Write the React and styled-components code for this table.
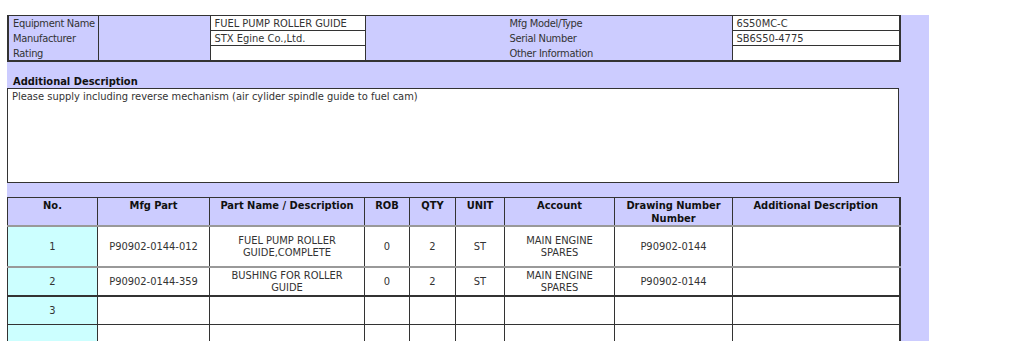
import React from 'react'
import styled, { createGlobalStyle } from 'styled-components'

const GlobalStyle = createGlobalStyle`
  body {
    margin: 0;
    background: #fff;
    font-family: "DejaVu Sans Condensed", "DejaVu Sans", Verdana, sans-serif;
    font-size: 11px;
    color: #333;
  }
`

const Panel = styled.div`
  width: 892px;
  margin: 15px 0 0 7px;
  padding-right: 30px;
  background: #ccccff;
`

const InfoTable = styled.table`
  width: 892px;
  border-collapse: collapse;
  table-layout: fixed;
  border: 2px solid #333;
  border-top-width: 1px;
`

const InfoCell = styled.td`
  height: 12px;
  line-height: 12px;
  padding: 2px 0 0 ${props => props.indent || 4}px;
  white-space: nowrap;
  overflow: hidden;
  vertical-align: middle;
  letter-spacing: ${props => (props.white ? '0' : '-0.3px')};
  background: ${props => (props.white ? '#fff' : '#ccccff')};
  border-left: 1px solid #333;
  border-right: 1px solid #333;
  border-top: ${props => (props.white ? '1px solid #333' : 'none')};
  border-bottom: ${props => (props.white ? '1px solid #333' : 'none')};
`

const DescLabel = styled.div`
  padding: 14px 0 0 6px;
  height: 12px;
  line-height: 12px;
  font-weight: bold;
  color: #111;
`

const DescBox = styled.div`
  height: 92px;
  background: #fff;
  border: 1px solid #333;
  padding: 1px 4px 0;
  line-height: 14px;
`

const Gap = styled.div`
  height: 14px;
`

const ItemsTable = styled.table`
  width: 892px;
  border-collapse: collapse;
  table-layout: fixed;
  border-left: 1px solid #333;
  border-right: 2px solid #333;
  border-top: 1px solid #333;
`

const HeadCell = styled.th`
  height: 26px;
  padding: 1px 3px 0;
  vertical-align: top;
  text-align: center;
  font-weight: bold;
  line-height: 13px;
  color: #111;
  background: #ccccff;
  border: 1px solid #333;
  border-bottom: 2px solid #999;
`

const ItemCell = styled.td`
  height: ${props => props.h}px;
  padding: 0 3px;
  text-align: center;
  vertical-align: middle;
  line-height: 12px;
  background: ${props => (props.first ? '#ccffff' : '#fff')};
  border: 1px solid #333;
  border-bottom: ${props => props.bottom};
`

const columns = [
  { title: 'No.', width: 90 },
  { title: 'Mfg Part', width: 112 },
  { title: 'Part Name / Description', width: 155 },
  { title: 'ROB', width: 45 },
  { title: 'QTY', width: 46 },
  { title: 'UNIT', width: 49 },
  { title: 'Account', width: 110 },
  { title: 'Drawing Number Number', width: 118 },
  { title: 'Additional Description', width: 167 }
]

const items = [
  {
    cells: ['1', 'P90902-0144-012', <>FUEL PUMP ROLLER<br />GUIDE,COMPLETE</>, '0', '2', 'ST', <>MAIN ENGINE<br />SPARES</>, 'P90902-0144', ''],
    h: 39,
    bottom: '2px solid #999'
  },
  {
    cells: ['2', 'P90902-0144-359', <>BUSHING FOR ROLLER<br />GUIDE</>, '0', '2', 'ST', <>MAIN ENGINE<br />SPARES</>, 'P90902-0144', ''],
    h: 27,
    bottom: '2px solid #333'
  },
  { cells: ['3', '', '', '', '', '', '', '', ''], h: 27, bottom: '1px solid #333' },
  { cells: ['', '', '', '', '', '', '', '', ''], h: 27, bottom: '1px solid #333' },
  { cells: ['', '', '', '', '', '', '', '', ''], h: 27, bottom: '1px solid #333' }
]

export default function App () {
  return (
    <>
      <GlobalStyle />
      <Panel>
        <InfoTable>
          <colgroup>
            <col style={{ width: 90 }} />
            <col style={{ width: 112 }} />
            <col style={{ width: 155 }} />
            <col style={{ width: 367 }} />
            <col style={{ width: 168 }} />
          </colgroup>
          <tbody>
            <tr>
              <InfoCell>Equipment Name</InfoCell>
              <InfoCell />
              <InfoCell white>FUEL PUMP ROLLER GUIDE</InfoCell>
              <InfoCell indent={144}>Mfg Model/Type</InfoCell>
              <InfoCell white>6S50MC-C</InfoCell>
            </tr>
            <tr>
              <InfoCell>Manufacturer</InfoCell>
              <InfoCell />
              <InfoCell white>STX Egine Co.,Ltd.</InfoCell>
              <InfoCell indent={144}>Serial Number</InfoCell>
              <InfoCell white>SB6S50-4775</InfoCell>
            </tr>
            <tr>
              <InfoCell>Rating</InfoCell>
              <InfoCell />
              <InfoCell white />
              <InfoCell indent={144}>Other Information</InfoCell>
              <InfoCell white />
            </tr>
          </tbody>
        </InfoTable>
        <DescLabel>Additional Description</DescLabel>
        <DescBox>Please supply including reverse mechanism (air cylider spindle guide to fuel cam)</DescBox>
        <Gap />
        <ItemsTable>
          <colgroup>
            {columns.map(col => <col key={col.title} style={{ width: col.width }} />)}
          </colgroup>
          <thead>
            <tr>
              {columns.map(col => <HeadCell key={col.title}>{col.title}</HeadCell>)}
            </tr>
          </thead>
          <tbody>
            {items.map((item, r) => (
              <tr key={r}>
                {item.cells.map((cell, c) => (
                  <ItemCell key={c} first={c === 0} h={item.h} bottom={item.bottom}>{cell}</ItemCell>
                ))}
              </tr>
            ))}
          </tbody>
        </ItemsTable>
      </Panel>
    </>
  )
}
